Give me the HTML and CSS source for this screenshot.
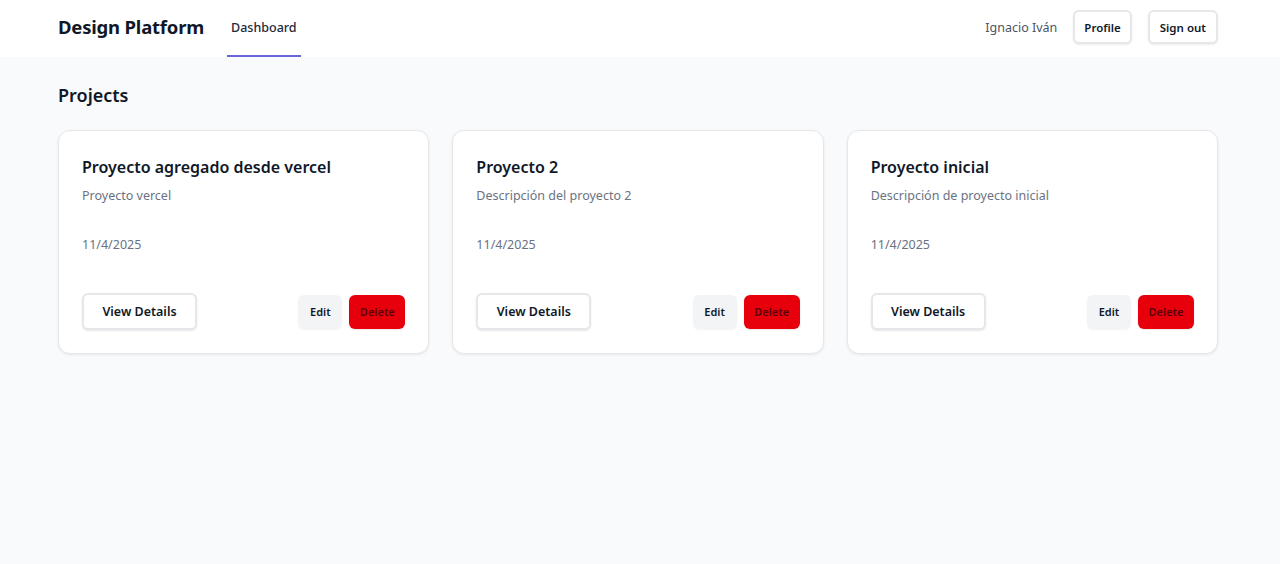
FILE: index.html
```html
<!DOCTYPE html>
<html lang="es">
<head>
<meta charset="utf-8">
<title>Design Platform</title>
<link rel="stylesheet" href="styles.css">
</head>
<body>
<header class="topbar">
  <div class="topbar-inner">
    <div class="left">
      <div class="brand">Design Platform</div>
      <nav class="nav"><a class="tab active">Dashboard</a></nav>
    </div>
    <div class="right">
      <span class="user">Ignacio Iván</span>
      <button class="btn-outline">Profile</button>
      <button class="btn-outline">Sign out</button>
    </div>
  </div>
</header>
<main class="main">
  <h1 class="page-title">Projects</h1>
  <div class="grid">
    <div class="card">
      <h2 class="card-title">Proyecto agregado desde vercel</h2>
      <p class="card-desc">Proyecto vercel</p>
      <p class="card-date">11/4/2025</p>
      <div class="card-actions">
        <button class="btn-view">View Details</button>
        <div class="actions-right">
          <button class="btn-edit">Edit</button>
          <button class="btn-delete">Delete</button>
        </div>
      </div>
    </div>
    <div class="card">
      <h2 class="card-title">Proyecto 2</h2>
      <p class="card-desc">Descripción del proyecto 2</p>
      <p class="card-date">11/4/2025</p>
      <div class="card-actions">
        <button class="btn-view">View Details</button>
        <div class="actions-right">
          <button class="btn-edit">Edit</button>
          <button class="btn-delete">Delete</button>
        </div>
      </div>
    </div>
    <div class="card">
      <h2 class="card-title">Proyecto inicial</h2>
      <p class="card-desc">Descripción de proyecto inicial</p>
      <p class="card-date">11/4/2025</p>
      <div class="card-actions">
        <button class="btn-view">View Details</button>
        <div class="actions-right">
          <button class="btn-edit">Edit</button>
          <button class="btn-delete">Delete</button>
        </div>
      </div>
    </div>
  </div>
</main>
</body>
</html>
```
FILE: styles.css
```css
* { box-sizing: border-box; }
html, body { margin: 0; padding: 0; }
body {
  background: #f9fafb;
  font-family: "Noto Sans", "Open Sans", sans-serif;
  color: #111827;
  min-height: 564px;
}
button { font-family: inherit; cursor: pointer; }
.topbar {
  background: #ffffff;
  height: 57px;
}
.topbar-inner {
  height: 57px;
  padding: 0 62px 0 58px;
  display: flex;
  align-items: stretch;
  justify-content: space-between;
}
.left { display: flex; align-items: stretch; gap: 23px; }
.brand {
  display: flex; align-items: center;
  padding-bottom: 4px;
  font-size: 18.5px; font-weight: 700; color: #101828;
  letter-spacing: -0.2px;
}
.nav { display: flex; align-items: stretch; }
.tab {
  display: flex; align-items: center;
  padding: 0 4px 1px 4px;
  font-size: 12.5px; font-weight: 500; color: #1e2939;
  border-bottom: 2px solid transparent;
}
.tab.active { border-bottom-color: #6a66d9; }
.right { display: flex; align-items: center; gap: 16px; padding-bottom: 3px; }
.user { font-size: 12.5px; color: #4a5565; margin-right: 0; }
.btn-outline {
  height: 34px; padding: 0 9px;
  background: #fff;
  border: 2px solid #e5e7eb;
  border-radius: 6px;
  font-size: 11.5px; font-weight: 600; color: #101828;
  box-shadow: 0 1px 2px rgba(0,0,0,0.08);
}
.btn-outline + .btn-outline { padding: 0 10px; }
.main { padding: 24px 62px 0 58px; }
.page-title {
  margin: 0 0 21px 0;
  font-size: 18px; font-weight: 600; color: #101828;
  line-height: 28px;
}
.grid {
  display: grid;
  grid-template-columns: repeat(3, 1fr);
  gap: 23px;
}
.card {
  background: #fff;
  border: 1px solid #e5e7eb;
  border-radius: 12px;
  box-shadow: 0 1px 3px rgba(0,0,0,0.08);
  padding: 23px 23px 23px 23px;
  height: 224px;
  display: flex; flex-direction: column;
}
.card-title {
  margin: 0;
  font-size: 16px; font-weight: 600; color: #101828;
  line-height: 26px;
}
.card-desc {
  margin: 6px 0 0 0;
  font-size: 12.5px; color: #6a7282;
  line-height: 20px;
}
.card-date {
  margin: 29px 0 0 0;
  font-size: 12.5px; color: #6a7282;
  line-height: 20px;
}
.card-actions {
  margin-top: auto;
  display: flex; align-items: center; justify-content: space-between;
}
.btn-view {
  height: 37px; width: 115px;
  background: #fff;
  border: 2px solid #e5e7eb;
  border-radius: 6px;
  font-size: 12.5px; font-weight: 600; color: #101828;
  box-shadow: 0 1px 2px rgba(0,0,0,0.1);
}
.actions-right { display: flex; gap: 7px; }
.btn-edit {
  height: 34px; width: 44px;
  background: #f3f4f6;
  border: none; border-radius: 6px;
  font-size: 11px; font-weight: 600; color: #101828;
  box-shadow: 0 1px 2px rgba(0,0,0,0.05);
}
.btn-delete {
  height: 34px; width: 56px;
  background: #e7000b;
  border: none; border-radius: 6px;
  font-size: 11px; font-weight: 600; color: #5c0008;
  box-shadow: 0 1px 2px rgba(0,0,0,0.1);
}
```
